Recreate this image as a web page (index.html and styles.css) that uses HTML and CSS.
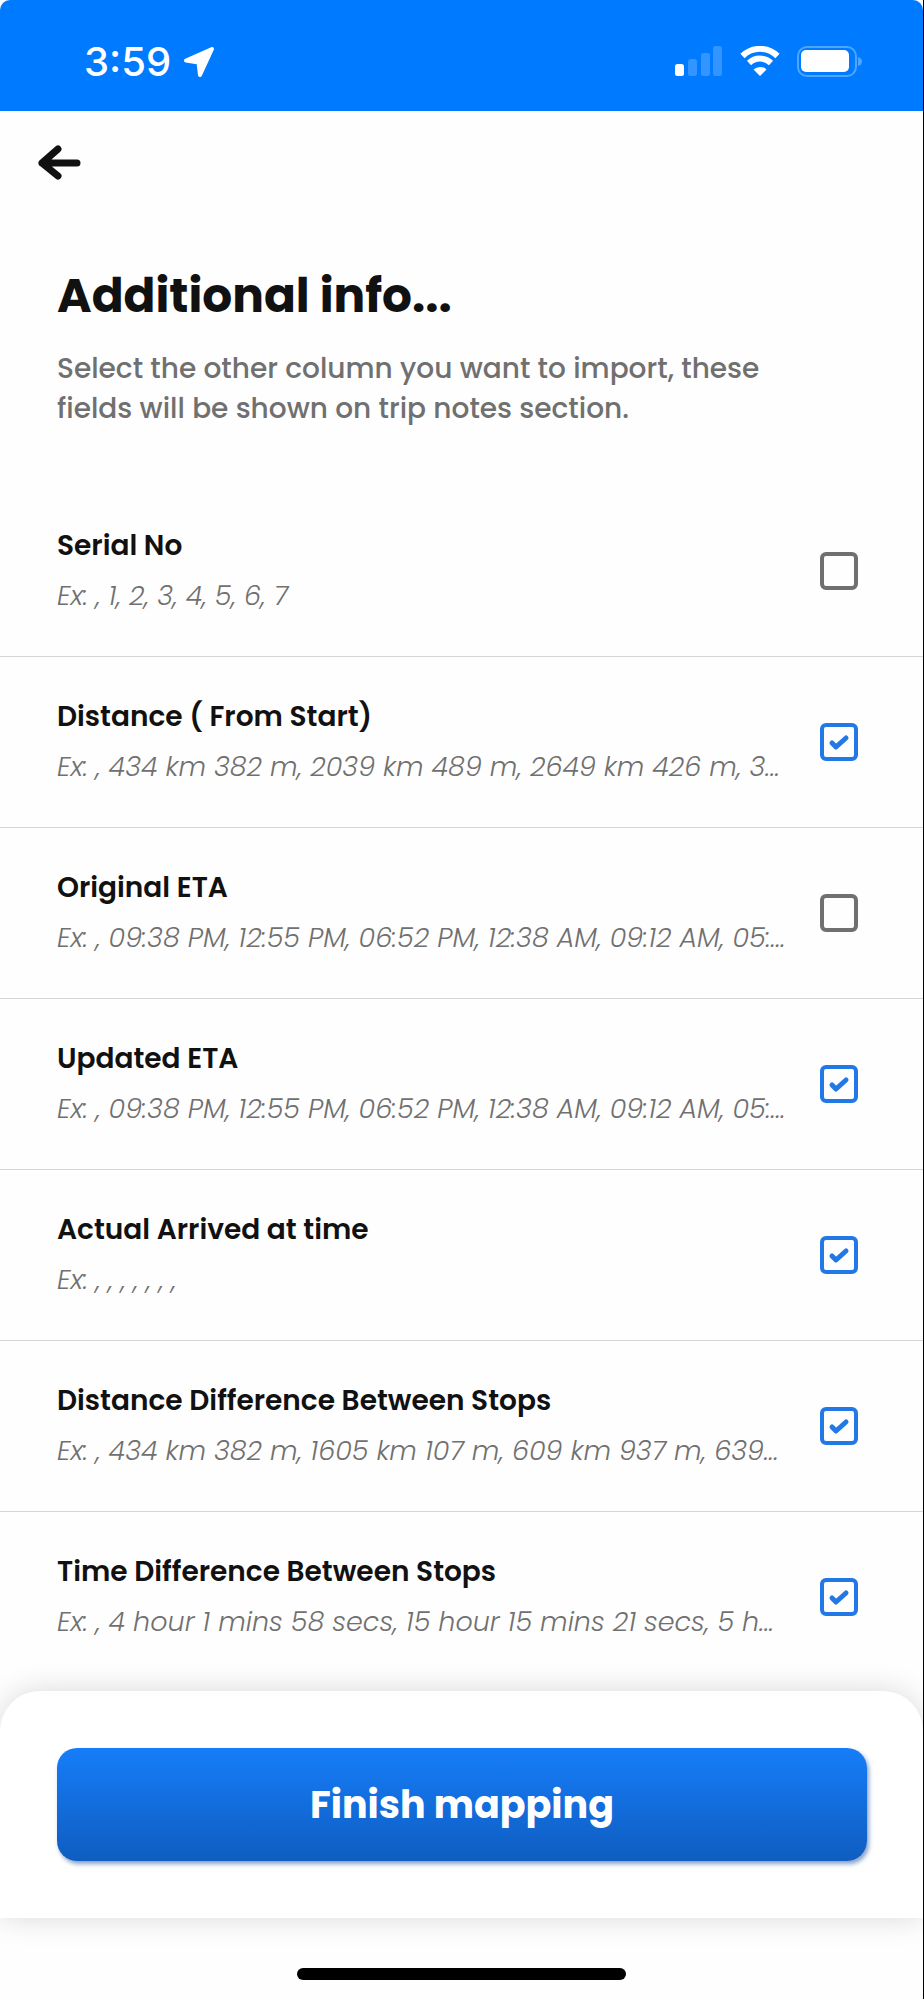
FILE: index.html
```html
<!DOCTYPE html>
<html lang="en">
<head>
  <meta charset="UTF-8" />
  <meta name="viewport" content="width=device-width, initial-scale=1.0"/>
  <title>Additional info</title>
  <link rel="stylesheet" href="styles.css">
</head>
<body>
  <div class="screen">
    <div class="status-bar">
      <div class="status-left">
        <span class="time">3:59</span>
        <svg class="location" width="32" height="32" viewBox="0 0 32 32" aria-hidden="true">
          <path d="M29 3 L17 29 L15.500 16.500 L3 14.500 Z" fill="#fff" stroke="#fff" stroke-width="4" stroke-linejoin="round"/>
        </svg>
      </div>
      <div class="status-right">
        <svg width="48" height="31" viewBox="0 0 48 31" aria-hidden="true">
          <rect x="0" y="18" width="9" height="12" rx="2.500" fill="#fff"/>
          <rect x="13" y="13" width="9" height="17" rx="2.500" fill="#3395ff"/>
          <rect x="26" y="7" width="9" height="23" rx="2.500" fill="#3395ff"/>
          <rect x="38" y="0" width="9" height="30" rx="2.500" fill="#3395ff"/>
        </svg>
        <svg width="40" height="31" viewBox="0 0 40 31" aria-hidden="true">
          <path d="M2.500 10 A25 25 0 0 1 37.500 10" fill="none" stroke="#fff" stroke-width="6"/>
          <path d="M9 17 A16 16 0 0 1 31 17" fill="none" stroke="#fff" stroke-width="6"/>
          <path d="M20 30 L13.500 23.500 A9.500 9.500 0 0 1 26.500 23.500 Z" fill="#fff"/>
        </svg>
        <svg width="66" height="31" viewBox="0 0 66 31" aria-hidden="true">
          <rect x="1" y="1" width="58" height="29" rx="9" fill="none" stroke="#4da6ff" stroke-width="2"/>
          <rect x="4" y="4" width="48" height="22" rx="5" fill="#fff"/>
          <path d="M61 11 Q65 12 65 15.500 Q65 19 61 20 Z" fill="#4da6ff"/>
        </svg>
      </div>
    </div>

    <div class="nav">
      <button class="back" type="button" aria-label="Back">
        <svg width="45" height="35" viewBox="0 0 45 35" aria-hidden="true">
          <path d="M40 18 H5 M21 4 L5 18 L21 31" fill="none" stroke="#111" stroke-width="7" stroke-linecap="round" stroke-linejoin="round"/>
        </svg>
      </button>
    </div>

    <div class="intro">
      <h1>Additional info...</h1>
      <p>Select the other column you want to import, these fields will be shown on trip notes section.</p>
    </div>

    <div class="column-list">
      <label class="column-row">
        <span class="column-text">
          <span class="column-name">Serial No</span>
          <span class="column-example">Ex: , 1, 2, 3, 4, 5, 6, 7</span>
        </span>
        <span class="check">
          <input type="checkbox">
          <svg viewBox="0 0 38 38" aria-hidden="true"><path d="M12 20 L16 24 L26 15"/></svg>
        </span>
      </label>
      <label class="column-row">
        <span class="column-text">
          <span class="column-name">Distance ( From Start)</span>
          <span class="column-example">Ex: , 434 km 382 m, 2039 km 489 m, 2649 km 426 m, 3...</span>
        </span>
        <span class="check">
          <input type="checkbox" checked>
          <svg viewBox="0 0 38 38" aria-hidden="true"><path d="M12 20 L16 24 L26 15"/></svg>
        </span>
      </label>
      <label class="column-row">
        <span class="column-text">
          <span class="column-name">Original ETA</span>
          <span class="column-example">Ex: , 09:38 PM, 12:55 PM, 06:52 PM, 12:38 AM, 09:12 AM, 05:...</span>
        </span>
        <span class="check">
          <input type="checkbox">
          <svg viewBox="0 0 38 38" aria-hidden="true"><path d="M12 20 L16 24 L26 15"/></svg>
        </span>
      </label>
      <label class="column-row">
        <span class="column-text">
          <span class="column-name">Updated ETA</span>
          <span class="column-example">Ex: , 09:38 PM, 12:55 PM, 06:52 PM, 12:38 AM, 09:12 AM, 05:...</span>
        </span>
        <span class="check">
          <input type="checkbox" checked>
          <svg viewBox="0 0 38 38" aria-hidden="true"><path d="M12 20 L16 24 L26 15"/></svg>
        </span>
      </label>
      <label class="column-row">
        <span class="column-text">
          <span class="column-name">Actual Arrived at time</span>
          <span class="column-example">Ex: , , , , , , ,</span>
        </span>
        <span class="check">
          <input type="checkbox" checked>
          <svg viewBox="0 0 38 38" aria-hidden="true"><path d="M12 20 L16 24 L26 15"/></svg>
        </span>
      </label>
      <label class="column-row">
        <span class="column-text">
          <span class="column-name">Distance Difference Between Stops</span>
          <span class="column-example">Ex: , 434 km 382 m, 1605 km 107 m, 609 km 937 m, 639...</span>
        </span>
        <span class="check">
          <input type="checkbox" checked>
          <svg viewBox="0 0 38 38" aria-hidden="true"><path d="M12 20 L16 24 L26 15"/></svg>
        </span>
      </label>
      <label class="column-row">
        <span class="column-text">
          <span class="column-name">Time Difference Between Stops</span>
          <span class="column-example">Ex: , 4 hour 1 mins 58 secs, 15 hour 15 mins 21 secs, 5 h...</span>
        </span>
        <span class="check">
          <input type="checkbox" checked>
          <svg viewBox="0 0 38 38" aria-hidden="true"><path d="M12 20 L16 24 L26 15"/></svg>
        </span>
      </label>
    </div>

    <div class="footer">
      <button class="finish" type="button">Finish mapping</button>
    </div>
    <div class="home-area">
      <div class="home-indicator"></div>
    </div>
  </div>
</body>
</html>
```
FILE: styles.css
```css
* {
  box-sizing: border-box;
}
body {
  margin: 0;
  font-family: Poppins, Inter, "Liberation Sans", sans-serif;
  background: #fefefe;
  color: #111;
}
.screen {
  display: flex;
  flex-direction: column;
  height: 100vh;
  border-right: 1px solid #000;
  overflow: hidden;
}

/* status bar */
.status-bar {
  display: flex;
  flex: none;
  justify-content: space-between;
  align-items: center;
  height: 111px;
  padding: 12px 60px 0 84px;
  background: #007aff;
  border-radius: 10px 10px 0 0;
}
.status-left {
  display: flex;
  align-items: center;
  gap: 12px;
}
.status-right {
  display: flex;
  align-items: center;
  gap: 17px;
}
.time {
  font-family: Inter, "Liberation Sans", sans-serif;
  font-size: 40px;
  font-weight: 500;
  color: #fff;
}

/* back button */
.nav {
  flex: none;
  padding: 34px 37px 86px;
}
.back {
  display: block;
  padding: 0;
  border: 0;
  background: none;
}
.back svg {
  display: block;
}

.intro {
  flex: none;
  padding: 0 57px 57px;
}
.intro h1 {
  margin: 0 0 23px;
  font-size: 47px;
  line-height: 60px;
  font-weight: 700;
}
.intro p {
  margin: 0;
  max-width: 760px;
  font-size: 28px;
  line-height: 40px;
  font-weight: 500;
  color: #707070;
}

.column-list {
  flex: 1;
  min-height: 0;
  overflow: hidden;
}
.column-row {
  display: flex;
  align-items: center;
  gap: 28px;
  padding: 40px 65px 40px 57px;
  border-bottom: 1px solid #d6d6d6;
}
.column-text {
  display: flex;
  flex: 1;
  flex-direction: column;
  gap: 10px;
  min-width: 0;
  line-height: 40px;
  white-space: nowrap;
}
.column-name {
  font-size: 28px;
  font-weight: 600;
}
.column-example {
  font-size: 27px;
  font-weight: 300;
  font-style: italic;
  color: #707070;
}
.check {
  display: grid;
  flex: none;
  width: 38px;
  height: 38px;
}
.check input {
  grid-area: 1 / 1;
  appearance: none;
  width: 38px;
  height: 38px;
  margin: 0;
  border: 4px solid #707070;
  border-radius: 6px;
}
.check svg {
  grid-area: 1 / 1;
  display: none;
  fill: none;
  stroke: #2279e6;
  stroke-width: 5;
  stroke-linecap: round;
  stroke-linejoin: round;
  pointer-events: none;
}
.check input:checked {
  border-color: #2279e6;
}
.check input:checked + svg {
  display: block;
}

/* footer */
.footer {
  flex: none;
  margin-top: 52px;
  padding: 57px 56px 57px 57px;
  background: #fff;
  border-radius: 40px 40px 0 0;
  box-shadow: 0 0 30px rgba(0,0,0,0.15);
}
.finish {
  display: block;
  width: 100%;
  height: 113px;
  padding: 0;
  border: 0;
  border-radius: 20px;
  background: linear-gradient(#167df9, #0f5dc0);
  box-shadow: 2px 3px 4px rgba(15,70,150,0.5);
  font-family: inherit;
  font-size: 38px;
  font-weight: 700;
  color: #fff;
}
.home-area {
  display: flex;
  flex: none;
  justify-content: center;
  padding: 50px 0 19px;
}
.home-indicator {
  width: 36%;
  max-width: 329px;
  height: 12px;
  border-radius: 6px;
  background: #000;
}
```
